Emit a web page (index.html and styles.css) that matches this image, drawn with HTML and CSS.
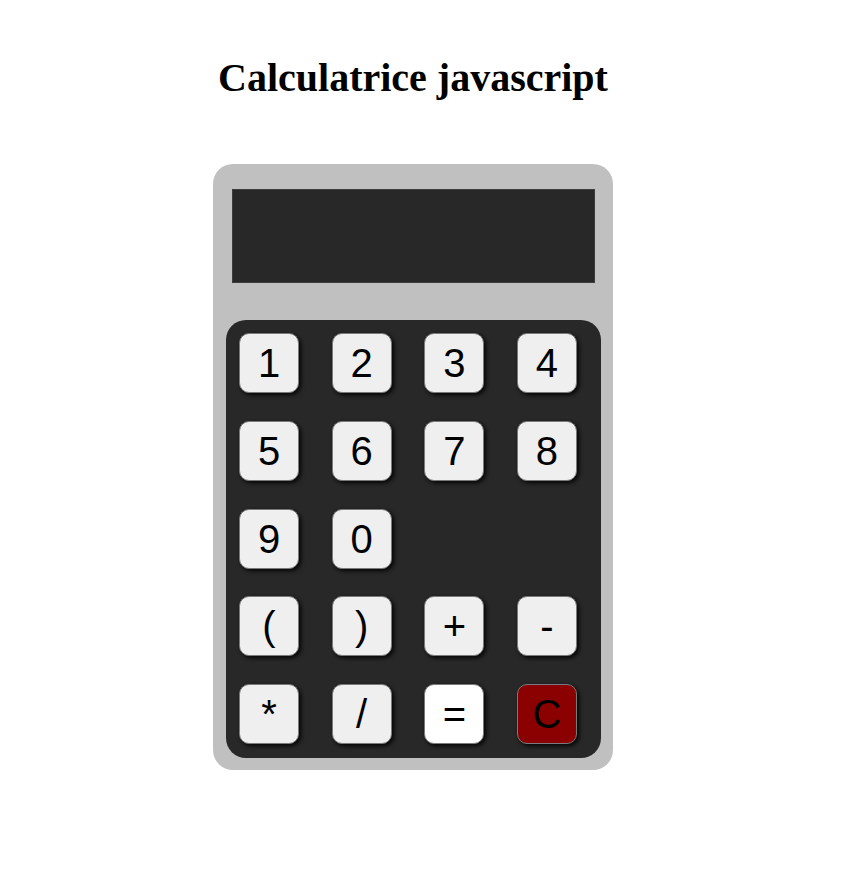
FILE: index.html
```html
<!DOCTYPE html>
<html lang="fr">
<head>
<meta charset="utf-8">
<title>Calculatrice javascript</title>
<link rel="stylesheet" href="styles.css">
</head>
<body>
<div class="page">
  <h1 class="title">Calculatrice javascript</h1>
  <div class="calc">
    <div class="screen"></div>
    <div class="keypad">
      <button class="key">1</button>
      <button class="key">2</button>
      <button class="key">3</button>
      <button class="key">4</button>
      <button class="key">5</button>
      <button class="key">6</button>
      <button class="key">7</button>
      <button class="key">8</button>
      <button class="key">9</button>
      <button class="key">0</button>
      <span class="blank"></span>
      <span class="blank"></span>
      <button class="key">(</button>
      <button class="key">)</button>
      <button class="key">+</button>
      <button class="key">-</button>
      <button class="key">*</button>
      <button class="key">/</button>
      <button class="key key-eq">=</button>
      <button class="key key-clear">C</button>
    </div>
  </div>
</div>
</body>
</html>
```

FILE: styles.css
```css
html, body {
  margin: 0;
  padding: 0;
  background: #ffffff;
}

.page {
  width: 826px;
  display: flex;
  flex-direction: column;
  align-items: center;
}

.title {
  font-family: "Liberation Serif", "Times New Roman", serif;
  font-weight: bold;
  font-size: 40px;
  margin: 53px 0 0 0;
  line-height: 50px;
  color: #000;
}

.calc {
  margin-top: 61px;
  width: 400px;
  box-sizing: border-box;
  background: #c0c0c0;
  border-radius: 20px;
  padding: 25px 12px 12px 13px;
  display: flex;
  flex-direction: column;
}

.screen {
  width: 363px;
  height: 94px;
  box-sizing: border-box;
  margin-left: 6px;
  background: #282828;
  border: 1px solid #3c3c3c;
}

.keypad {
  margin-top: 37px;
  background: #282828;
  border-radius: 20px;
  height: 438px;
  box-sizing: border-box;
  padding: 13px 24px 14px 13px;
  display: grid;
  grid-template-columns: repeat(4, 60px);
  grid-auto-rows: 60px;
  column-gap: 32.67px;
  row-gap: 27.75px;
}

.key {
  width: 60px;
  height: 60px;
  box-sizing: border-box;
  margin: 0;
  padding: 0;
  border: 1px solid #7a7a7a;
  border-radius: 10px;
  background: #efefef;
  color: #000;
  font-family: "Liberation Sans", Arial, sans-serif;
  font-size: 40px;
  line-height: 1;
  display: flex;
  align-items: center;
  justify-content: center;
  box-shadow: 2px 2px 4px rgba(0, 0, 0, 0.9);
}

.key-eq {
  background: #ffffff;
}

.key-clear {
  background: #8b0000;
}
```
